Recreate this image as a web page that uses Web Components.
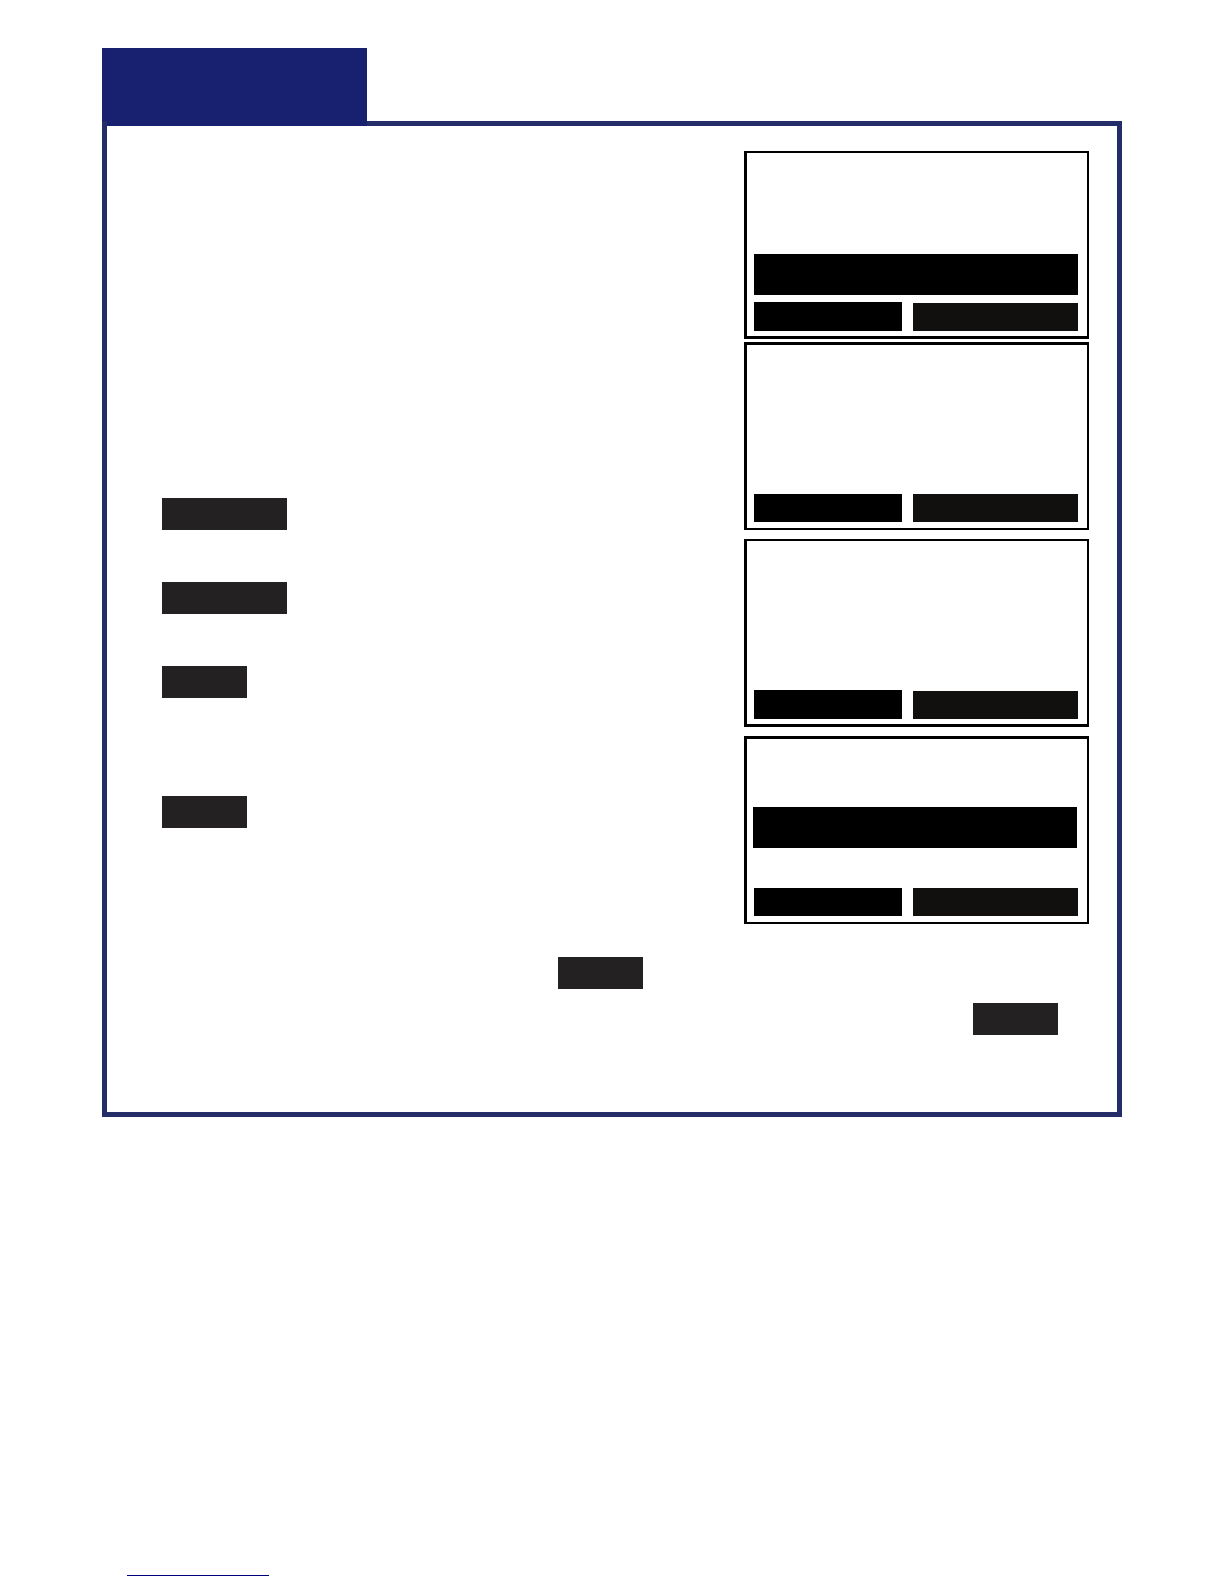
<!DOCTYPE html>
<html lang="en">
<head>
<meta charset="utf-8">
<meta name="viewport" content="width=device-width, initial-scale=1">
<title>Manual page</title>
<style>
  body { margin: 0; background: #fff; font-family: "Liberation Sans", Arial, sans-serif; }
</style>
</head>
<body>
<manual-page>
  <section-panel>
    <step-list slot="steps">
      <key-chip size="wide"></key-chip>
      <key-chip size="wide"></key-chip>
      <key-chip></key-chip>
      <key-chip class="spaced"></key-chip>
    </step-list>
    <phone-screen slot="screens" highlight="low" edge="base"></phone-screen>
    <phone-screen slot="screens" class="close"></phone-screen>
    <phone-screen slot="screens" edge="base"></phone-screen>
    <phone-screen slot="screens" highlight="middle"></phone-screen>
    <key-chip slot="note"></key-chip>
    <key-chip slot="note-end"></key-chip>
  </section-panel>
  <footer-link slot="footer"></footer-link>
</manual-page>

<script>
  // Registers an element whose open shadow root holds the given markup.
  function define(name, html) {
    const template = document.createElement("template");
    template.innerHTML = html;
    customElements.define(name, class extends HTMLElement {
      constructor() {
        super();
        this.attachShadow({ mode: "open" }).append(template.content.cloneNode(true));
      }
    });
  }

  define("manual-page", `
    <style>
      :host { display: flex; flex-direction: column; box-sizing: border-box;
              min-height: 100vh; padding: 48px 102px 8px; }
      footer { margin-top: auto; padding: 24px 25px 0; }
    </style>
    <main><slot></slot></main>
    <footer><slot name="footer"></slot></footer>
  `);

  define("section-panel", `
    <style>
      :host { display: block; }
      .tab { width: 265px; height: 73px; background: #17216f; }
      .frame { border: 5px solid #242d68; padding-bottom: 77px; }
      .tab-base { width: 260px; height: 5px; margin-top: -5px; background: #17216f; }
      .columns { display: flex; justify-content: space-between; padding: 25px 28px 0 55px; }
      .screens { display: flex; flex-direction: column; gap: 9px; width: 345px; }
      .screens ::slotted(.close) { margin-top: -6px; }
      .notes { display: flex; flex-direction: column; gap: 14px; padding: 33px 59px 0 55px; }
      .note { display: flex; padding-left: 396px; }
      .note-end { display: flex; justify-content: flex-end; }
    </style>
    <div class="tab"></div>
    <div class="frame">
      <div class="tab-base"></div>
      <div class="columns">
        <slot name="steps"></slot>
        <div class="screens"><slot name="screens"></slot></div>
      </div>
      <div class="notes">
        <div class="note"><slot name="note"></slot></div>
        <div class="note-end"><slot name="note-end"></slot></div>
      </div>
    </div>
  `);

  define("step-list", `
    <style>
      :host { display: flex; flex-direction: column; gap: 52px; padding-top: 347px; }
      ::slotted(.spaced) { margin-top: 46px; }
    </style>
    <slot></slot>
  `);

  define("key-chip", `
    <style>
      :host { display: block; width: 85px; height: 32px; background: #242122; }
      :host([size="wide"]) { width: 125px; }
    </style>
  `);

  define("phone-screen", `
    <style>
      :host { display: flex; flex-direction: column; justify-content: flex-end;
              box-sizing: border-box; height: 188px; padding: 0 9px 6px 7px;
              border: solid #000; border-width: 3px 2px 2px 3px; }
      :host([edge="base"]) { border-width: 2px 2px 3px 3px; padding-bottom: 5px; }
      .highlight { display: none; height: 41px; background: #000; }
      :host([highlight]) .highlight { display: block; }
      :host([highlight="low"]) .highlight { margin-bottom: 7px; }
      :host([highlight="middle"]) .highlight { margin: 0 1px 40px -1px; }
      .keys { display: flex; align-items: flex-end; gap: 11px; }
      button { border: 0; border-radius: 0; padding: 0; height: 28px; }
      .left { flex: 148; background: #000; }
      .right { flex: 165; background: #11100e; }
      :host([edge="base"]) .left { height: 29px; }
    </style>
    <div class="highlight"></div>
    <div class="keys">
      <button class="left" type="button" aria-label="Left soft key"></button>
      <button class="right" type="button" aria-label="Right soft key"></button>
    </div>
  `);

  define("footer-link", `
    <style>
      :host { display: block; }
      a { display: block; width: 142px; height: 16px; border-bottom: 1px solid #00007f; }
    </style>
    <a href="#" aria-label="Website"></a>
  `);
</script>
</body>
</html>
